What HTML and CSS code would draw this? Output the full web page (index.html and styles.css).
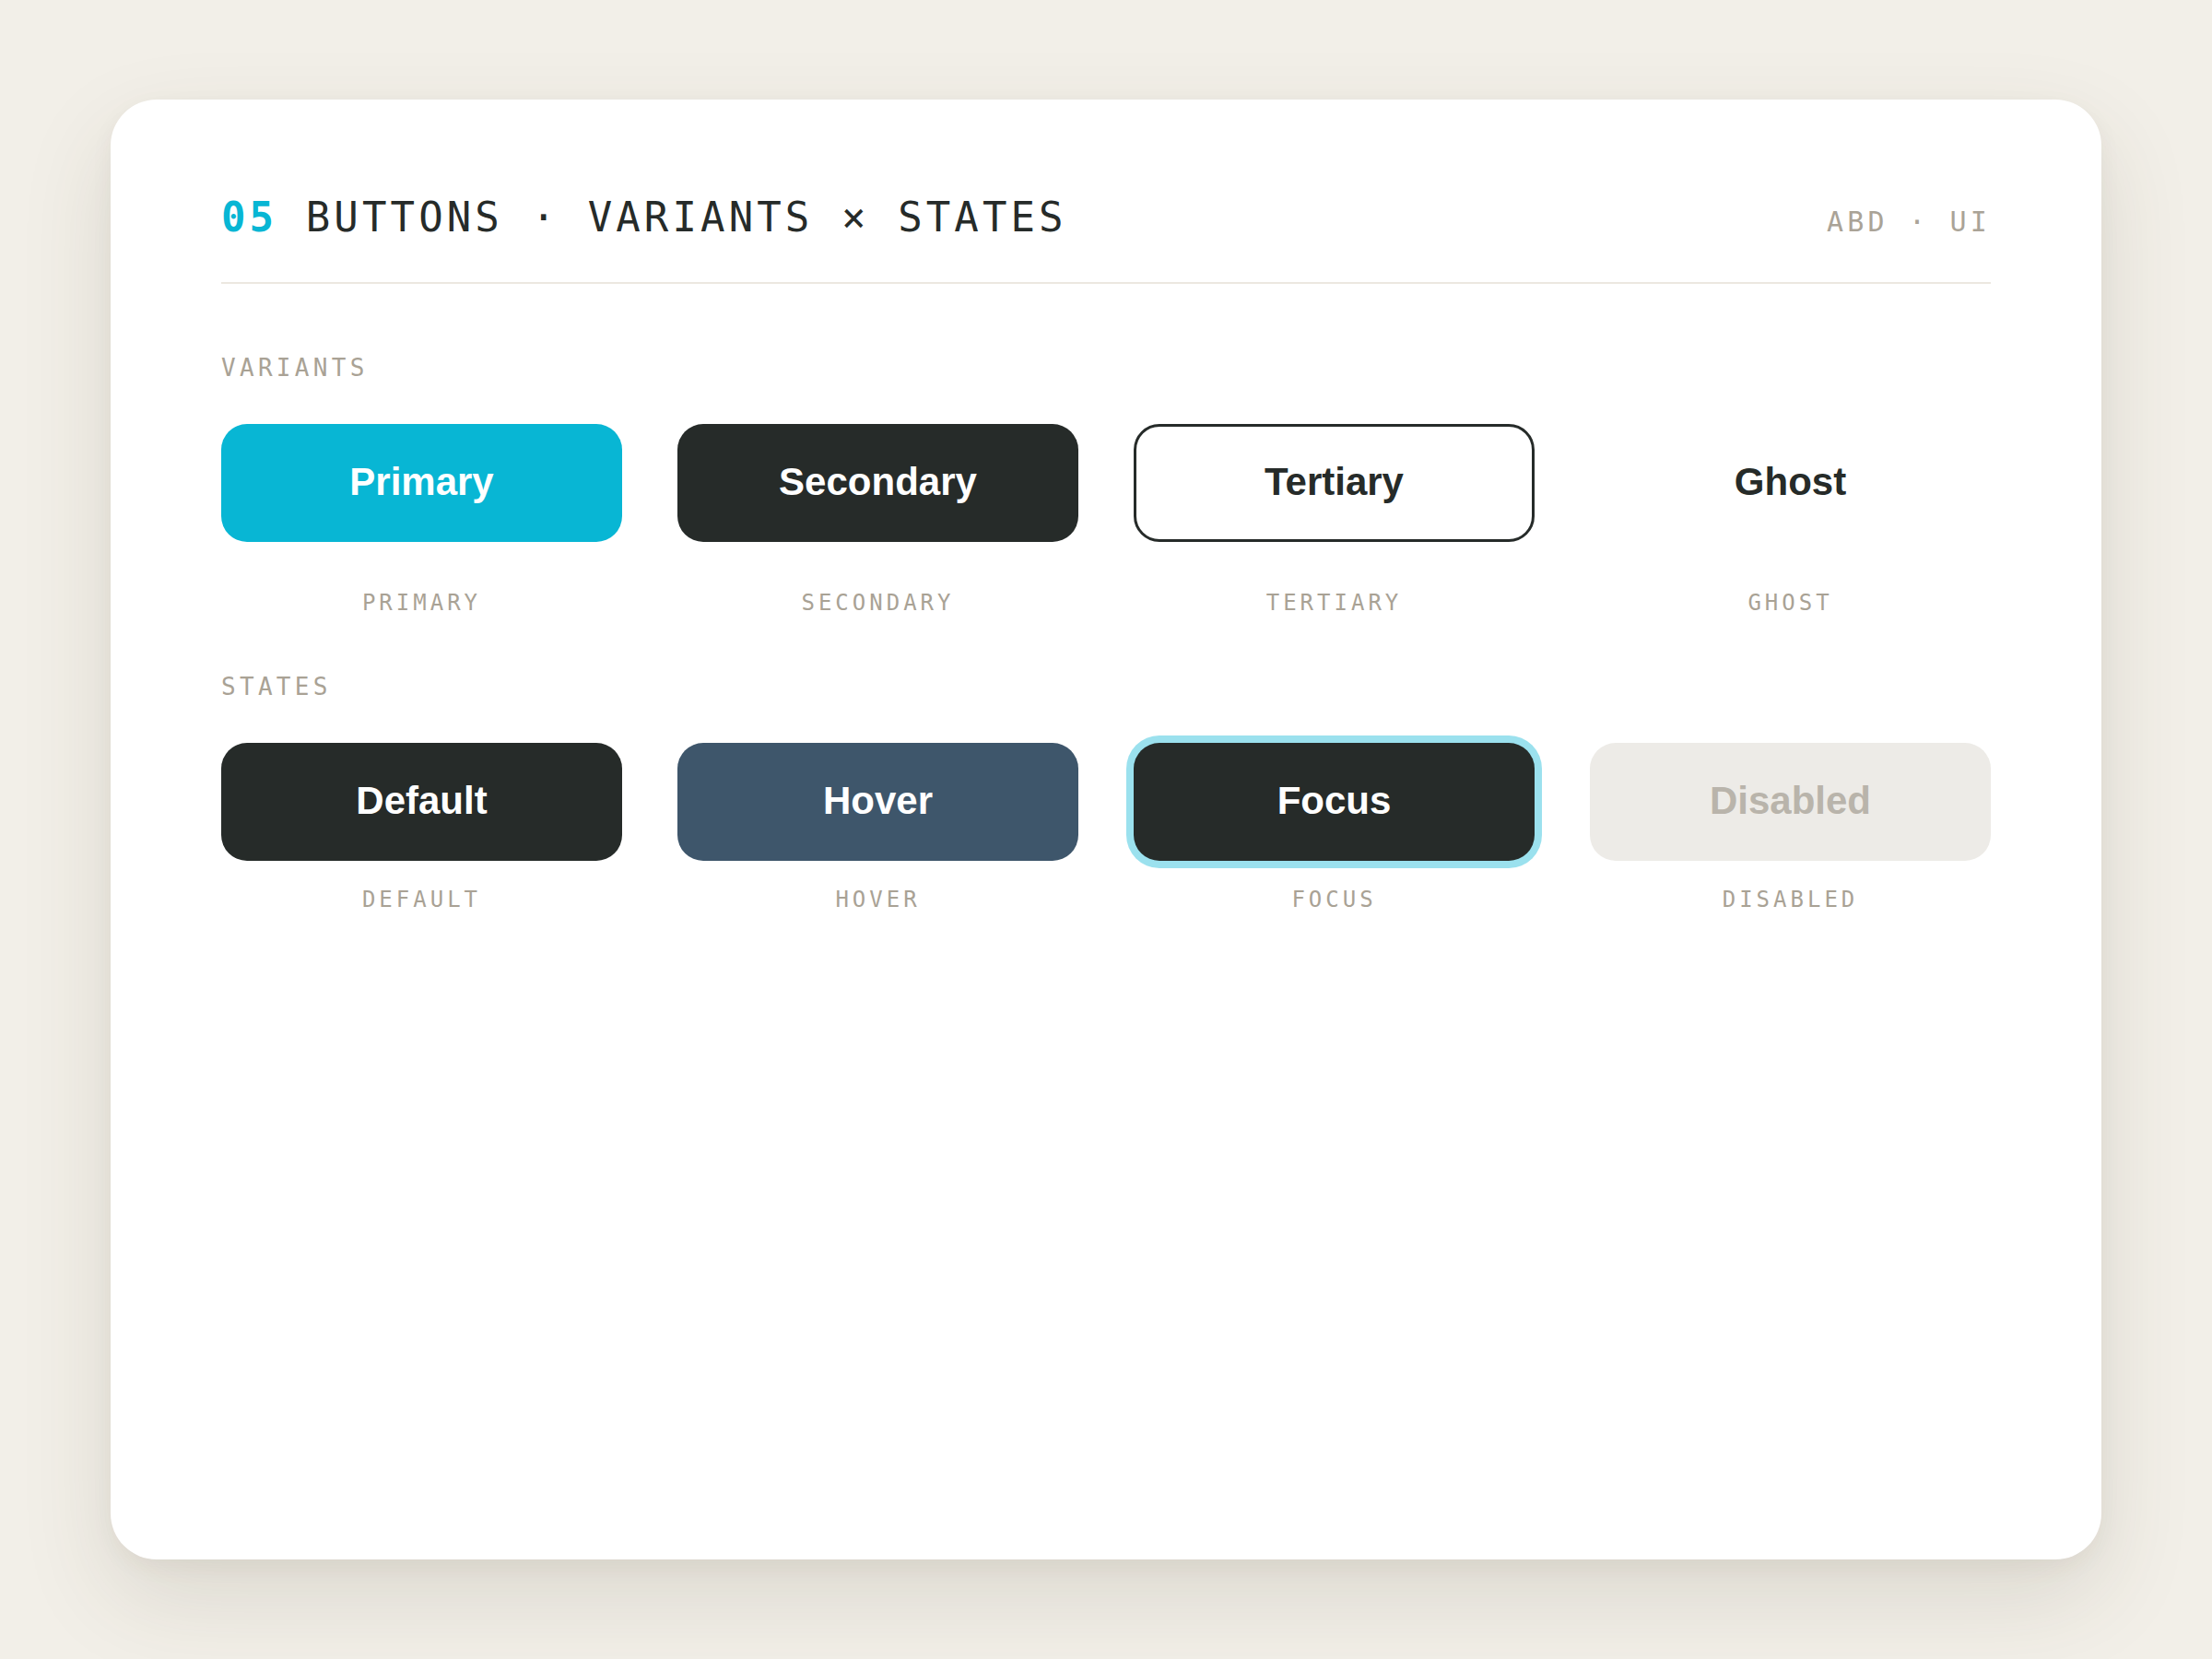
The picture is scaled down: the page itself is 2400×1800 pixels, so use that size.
FILE: index.html
```html
<!DOCTYPE html>
<html>
  <head>
    <meta charset="utf-8">
    <title>Buttons · Variants × States</title>
    <link rel="stylesheet" href="styles.css">
  </head>
  <body>
    <div class="card">
      <div class="header">
        <h1 class="title"><span class="num">05</span> BUTTONS · VARIANTS × STATES</h1>
        <span class="brand">ABD · UI</span>
      </div>

      <div class="section-label first">VARIANTS</div>
      <div class="row variants">
        <div class="cell">
          <div class="btn primary">Primary</div>
          <div class="caption">PRIMARY</div>
        </div>
        <div class="cell">
          <div class="btn dark">Secondary</div>
          <div class="caption">SECONDARY</div>
        </div>
        <div class="cell">
          <div class="btn outline">Tertiary</div>
          <div class="caption">TERTIARY</div>
        </div>
        <div class="cell">
          <div class="btn ghost">Ghost</div>
          <div class="caption">GHOST</div>
        </div>
      </div>

      <div class="section-label">STATES</div>
      <div class="row states">
        <div class="cell">
          <div class="btn dark">Default</div>
          <div class="caption">DEFAULT</div>
        </div>
        <div class="cell">
          <div class="btn hover">Hover</div>
          <div class="caption">HOVER</div>
        </div>
        <div class="cell">
          <div class="btn dark focus">Focus</div>
          <div class="caption">FOCUS</div>
        </div>
        <div class="cell">
          <div class="btn disabled">Disabled</div>
          <div class="caption">DISABLED</div>
        </div>
      </div>
    </div>
  </body>
</html>
```

FILE: styles.css
```css
html {
  font-family: "DejaVu Sans Mono", monospace;
}

body {
  margin: 0;
  padding: 108px 120px;
  background-color: #f2efe8;
  color: #262b29;
}

.card {
  height: 1584px;
  box-sizing: border-box;
  padding: 106px 120px;
  background-color: #ffffff;
  border-radius: 50px;
  box-shadow: 0 40px 100px rgba(70, 60, 40, 0.13), 0 8px 24px rgba(70, 60, 40, 0.05);
}

.header {
  display: flex;
  justify-content: space-between;
  align-items: baseline;
  padding-bottom: 48px;
  border-bottom: 2px solid #ece8e0;
}

.title {
  margin: 0;
  font-size: 44px;
  font-weight: normal;
  line-height: 44px;
  letter-spacing: 4.1px;
  color: #262b29;
}

.num {
  color: #08b6d4;
  font-weight: bold;
}

.brand {
  font-size: 30px;
  line-height: 30px;
  letter-spacing: 4.2px;
  color: #aaa397;
}

.section-label {
  margin-top: 66px;
  font-size: 26px;
  line-height: 26px;
  letter-spacing: 4.3px;
  color: #a9a295;
}

.section-label.first {
  margin-top: 78px;
}

.row {
  display: grid;
  grid-template-columns: repeat(4, 1fr);
  gap: 60px;
  margin-top: 48px;
}

.cell {
  display: flex;
  flex-direction: column;
  align-items: stretch;
}

.btn {
  display: flex;
  align-items: center;
  justify-content: center;
  height: 128px;
  box-sizing: border-box;
  padding-bottom: 3px;
  border-radius: 28px;
  font-family: "Liberation Sans", Arial, sans-serif;
  font-weight: bold;
  font-size: 42px;
  color: #ffffff;
}

.primary {
  background-color: #08b6d4;
}

.dark {
  background-color: #262b29;
}

.outline {
  background-color: #ffffff;
  border: 3.5px solid #262b29;
  color: #262b29;
}

.ghost {
  color: #262b29;
}

.hover {
  background-color: #3e566b;
}

.focus {
  box-shadow: 0 0 0 8px #9be1ee;
}

.disabled {
  background-color: #edebe7;
  color: #b9b4ab;
}

.caption {
  margin-top: 54px;
  text-align: center;
  font-size: 24px;
  line-height: 24px;
  letter-spacing: 4px;
  color: #a9a295;
}

.states .caption {
  margin-top: 30px;
}
```
